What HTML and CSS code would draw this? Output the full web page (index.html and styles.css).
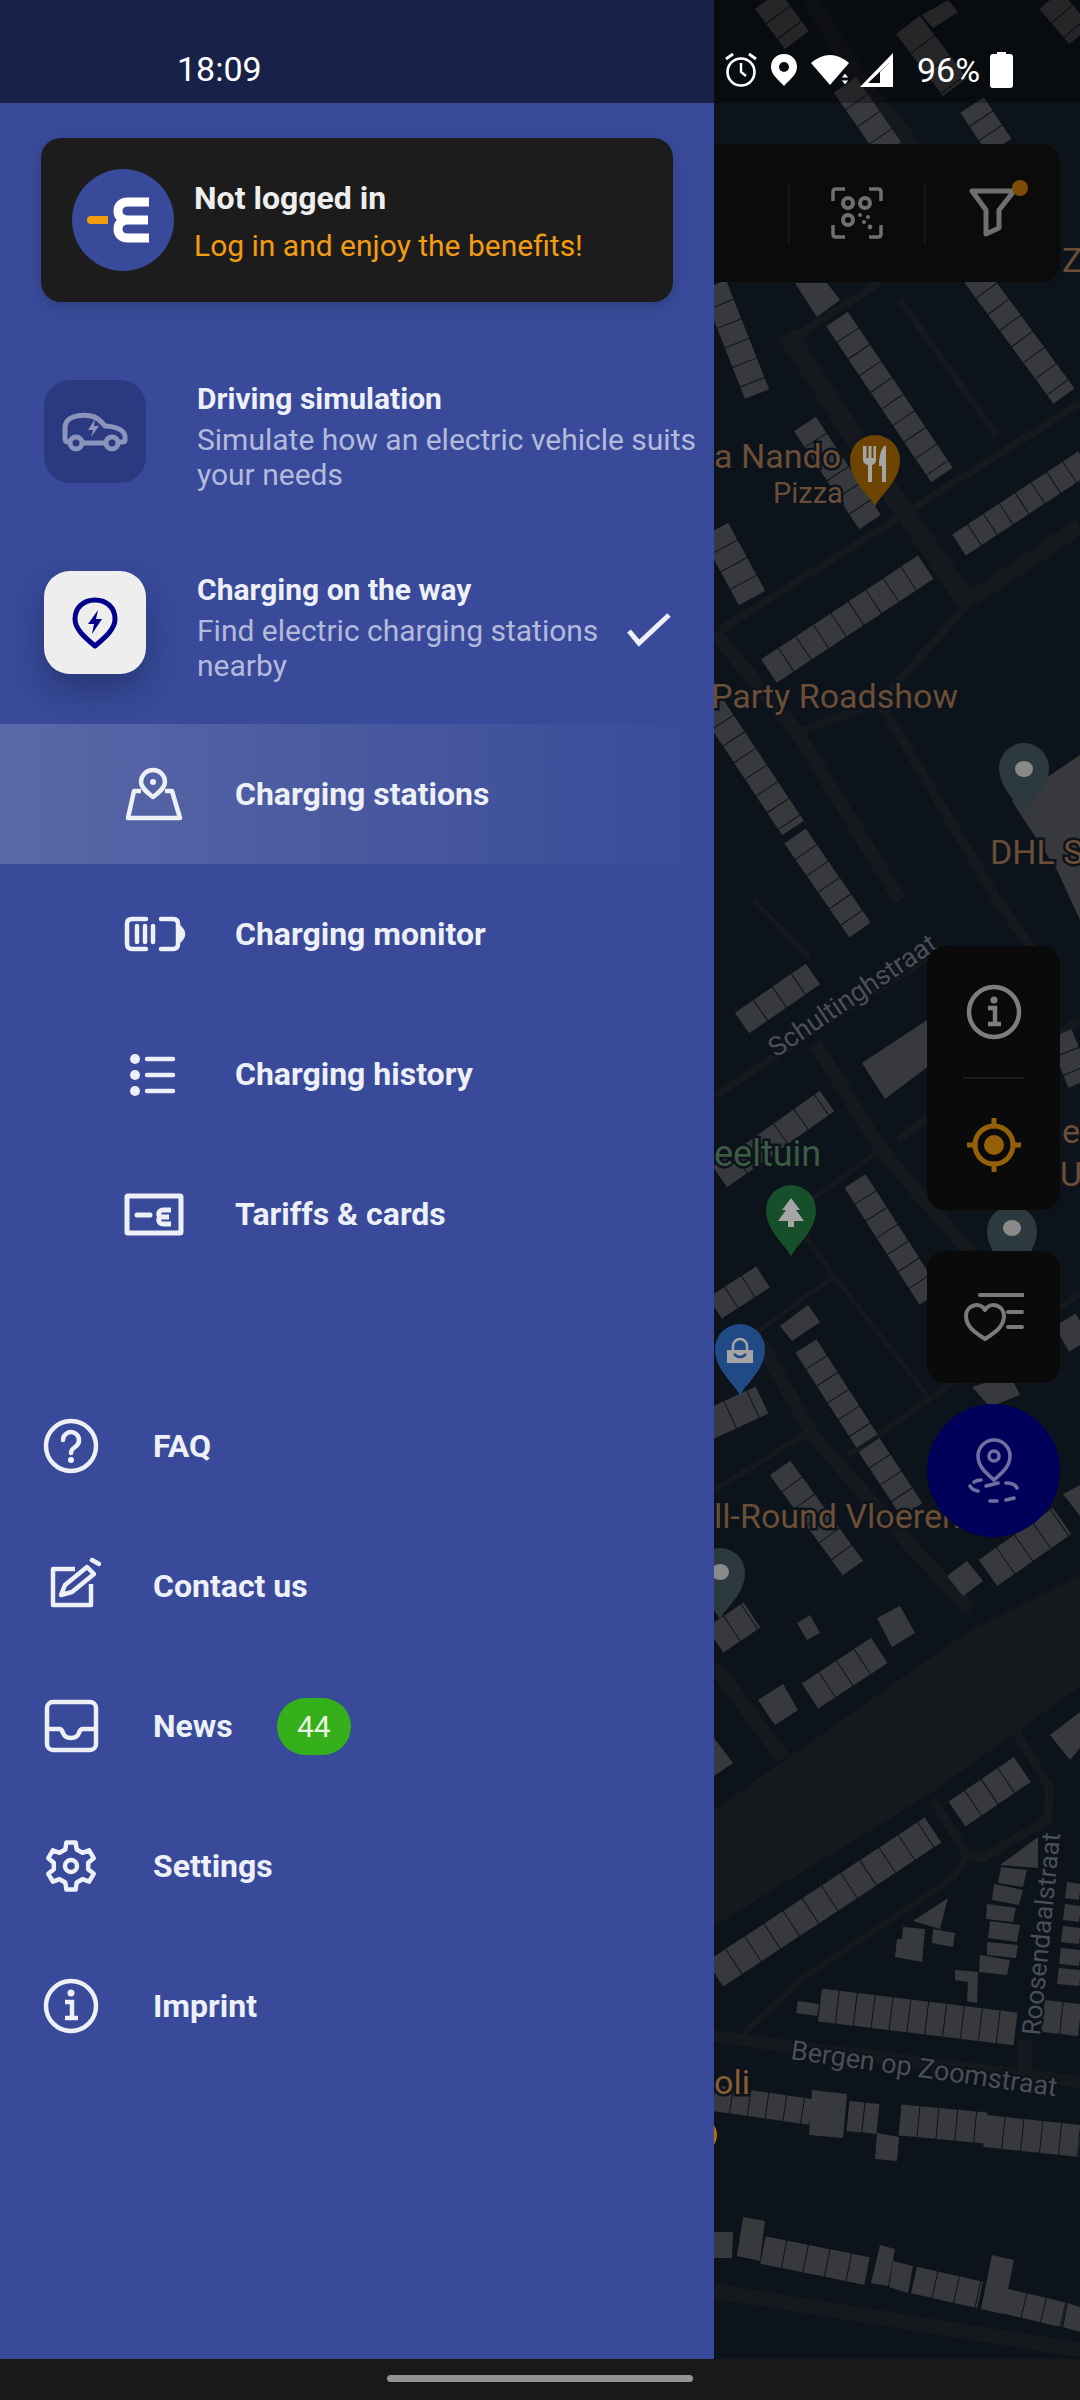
FILE: index.html
```html
<!DOCTYPE html>
<html lang="en">
<head>
  <meta charset="UTF-8" />
  <title>Charging stations</title>
  <link rel="stylesheet" href="styles.css">
</head>
<body>
<div class="screen">
  <div class="main">

    <aside class="drawer">
      <div class="drawer-status">18:09</div>

      <div class="account">
        <svg class="account-logo" viewBox="0 0 102 102">
          <circle cx="51" cy="51" r="51" fill="#384a99"/>
          <path d="M19 47 H36 V55 H19 Q15 55 15 51 Q15 47 19 47Z" fill="#f39c12"/>
          <path d="M77 33 H56 C49 33 46 37 46 42 C46 47 49 51 56 51 H76 M56 51 C49 51 46 55 46 60 C46 65 49 69 56 69 H77" fill="none" stroke="#fff" stroke-width="9"/>
        </svg>
        <div class="account-text">
          <div class="account-title">Not logged in</div>
          <div class="account-sub">Log in and enjoy the benefits!</div>
        </div>
      </div>

      <div class="modes">
        <div class="mode">
          <div class="mode-tile">
            <svg width="66" height="40" viewBox="0 0 66 40" fill="none" stroke="#8b94bd" stroke-width="5" stroke-linejoin="round" stroke-linecap="round">
              <path d="M7 30 H6 Q3 30 3 26 V16 Q3 8 11 5 Q20 2 29 4 Q36 5 43 14 Q61 15 63 24 V28 Q63 30 60 30 H58"/>
              <circle cx="14" cy="31" r="6"/>
              <circle cx="50" cy="31" r="6"/>
              <path d="M22 31 H42"/>
              <path d="M33 7 L26 18 H31 L29 25 L37 14 H32Z" fill="#8b94bd" stroke="none"/>
            </svg>
          </div>
          <div class="mode-text">
            <div class="mode-title">Driving simulation</div>
            <div class="mode-sub">Simulate how an electric vehicle suits your needs</div>
          </div>
        </div>

        <div class="mode">
          <div class="mode-tile mode-tile-on">
            <svg width="46" height="52" viewBox="0 0 46 52" fill="none" stroke="#00008b" stroke-width="5" stroke-linejoin="round">
              <path d="M23 3 C11 3 3 11 3 22 C3 33 15 42 23 49 C31 42 43 33 43 22 C43 11 35 3 23 3Z"/>
              <path d="M26 13 L16 27 H22 L20 37 L30 22 H24Z" fill="#00008b" stroke="none"/>
            </svg>
          </div>
          <div class="mode-text">
            <div class="mode-title">Charging on the way</div>
            <div class="mode-sub">Find electric charging stations nearby</div>
          </div>
          <svg class="mode-check" width="44" height="34" viewBox="0 0 44 34" fill="none" stroke="#eef0f7" stroke-width="5">
            <path d="M2 18 L12 30 L42 2"/>
          </svg>
        </div>
      </div>

      <nav class="sub-menu">
        <div class="sub-item sub-item-on">
          <svg class="sub-icon" viewBox="0 0 66 66" fill="none" stroke="#eef0f7" stroke-width="4.5" stroke-linejoin="round">
            <path d="M21 30 H14 L8 57 H60 L52 30 H45"/>
            <path d="M33 36 C27 31 21 27 21 21 A12 12 0 0 1 45 21 C45 27 39 31 33 36Z"/>
            <circle cx="33" cy="21" r="3" fill="#eef0f7" stroke="none"/>
          </svg>
          <span>Charging stations</span>
        </div>
        <div class="sub-item">
          <svg class="sub-icon" viewBox="0 0 66 66" fill="none" stroke="#eef0f7" stroke-width="4.5" stroke-linecap="round">
            <path d="M26 18 H12 Q7 18 7 23 V43 Q7 48 12 48 H26"/>
            <path d="M41 18 H53 Q58 18 58 23 V43 Q58 48 53 48 H41"/>
            <path d="M17 25 V41 M25 25 V41 M33 25 V41"/>
            <path d="M60 27 Q66 33 60 39Z" fill="#eef0f7"/>
          </svg>
          <span>Charging monitor</span>
        </div>
        <div class="sub-item">
          <svg class="sub-icon" viewBox="0 0 66 66" fill="none" stroke="#eef0f7" stroke-width="4.5" stroke-linecap="round">
            <circle cx="15" cy="18" r="5" fill="#eef0f7" stroke="none"/>
            <circle cx="15" cy="34" r="5" fill="#eef0f7" stroke="none"/>
            <circle cx="15" cy="50" r="5" fill="#eef0f7" stroke="none"/>
            <path d="M27 18 H53 M27 34 H53 M27 50 H53"/>
          </svg>
          <span>Charging history</span>
        </div>
        <div class="sub-item">
          <svg class="sub-icon" viewBox="0 0 66 66" fill="none" stroke="#eef0f7" stroke-width="5">
            <rect x="7" y="15" width="54" height="37" rx="1"/>
            <path d="M17 34 H30" stroke-linecap="round"/>
            <path d="M51 29 H43 C38 29 37 36 42 36 H49 M42 36 C37 36 38 43 43 43 H51"/>
          </svg>
          <span>Tariffs &amp; cards</span>
        </div>
      </nav>

      <nav class="main-menu">
        <div class="menu-item">
          <svg class="menu-icon" viewBox="0 0 60 60" fill="none" stroke="#eef0f7" stroke-width="4.5">
            <circle cx="30" cy="30" r="25"/>
            <path d="M22 24 a8 8 0 1 1 12 7 c-3 2 -4 3 -4 6" stroke-linecap="round"/>
            <circle cx="30" cy="44" r="3" fill="#eef0f7" stroke="none"/>
          </svg>
          <span>FAQ</span>
        </div>
        <div class="menu-item">
          <svg class="menu-icon" viewBox="0 0 60 60" fill="none" stroke="#eef0f7" stroke-width="4.5" stroke-linejoin="round">
            <path d="M34 13 H12 V49 H50 V28"/>
            <path d="M20 39 L24 29 L46 11 L53 18 L31 36Z"/>
            <path d="M51 4 L58 8" stroke-linecap="round"/>
          </svg>
          <span>Contact us</span>
        </div>
        <div class="menu-item">
          <svg class="menu-icon" viewBox="0 0 60 60" fill="none" stroke="#eef0f7" stroke-width="4.5">
            <rect x="6" y="6" width="49" height="48" rx="6"/>
            <path d="M6 33 H18 Q21 33 22 37 Q24 42 30 42 Q36 42 38 37 Q39 33 42 33 H55"/>
          </svg>
          <span>News</span>
          <span class="badge">44</span>
        </div>
        <div class="menu-item">
          <svg class="menu-icon" viewBox="0 0 60 60" fill="none" stroke="#eef0f7" stroke-width="4.5" stroke-linejoin="round">
            <path d="M25.4 6.4 H34.6 L35.7 13.5 L41.5 16.8 L48.1 14.3 L52.7 22.2 L47.2 26.7 V33.3 L52.7 37.8 L48.1 45.7 L41.5 43.2 L35.7 46.5 L34.6 53.6 H25.4 L24.3 46.5 L18.5 43.2 L11.9 45.7 L7.3 37.8 L12.8 33.3 V26.7 L7.3 22.2 L11.9 14.3 L18.5 16.8 L24.3 13.5Z"/>
            <circle cx="30" cy="30" r="6"/>
          </svg>
          <span>Settings</span>
        </div>
        <div class="menu-item">
          <svg class="menu-icon" viewBox="0 0 60 60" fill="none" stroke="#eef0f7" stroke-width="4.5">
            <circle cx="30" cy="30" r="25"/>
            <circle cx="30" cy="17" r="3.5" fill="#eef0f7" stroke="none"/>
            <path d="M24 26 H31 V42 M24 42 H37"/>
          </svg>
          <span>Imprint</span>
        </div>
      </nav>
    </aside>

    <section class="map">
      <svg class="map-canvas" viewBox="714 0 366 2359">
        <defs>
          <path id="pin" d="M0 0 C-3 -10 -25 -25 -25 -47 A25 25 0 1 1 25 -47 C25 -25 3 -10 0 0Z"/>
        </defs>

        <!-- roads -->
        <g class="roads">
          <path d="M714 1810 L970 1630 L1080 1575 V1687 L930 1794 L714 1926Z" class="road-fill"/>
          <path d="M787 334 L887 487 L967 602" stroke-width="20"/>
          <path d="M810 0 L867 90 L903 133 L1000 280" stroke-width="16"/>
          <path d="M900 300 L997 436" stroke-width="7"/>
          <path d="M722 629 L1080 403" stroke-width="8"/>
          <path d="M793 338 L853 300 L880 282" stroke-width="8"/>
          <path d="M973 598 L1080 526" stroke-width="16"/>
          <path d="M715 633 L797 732 L900 900" stroke-width="14"/>
          <path d="M880 702 L997 900 L1040 960" stroke-width="10"/>
          <path d="M797 732 L880 702 L973 598" stroke-width="8"/>
          <path d="M815 1043 L880 1148 L970 1253" stroke-width="14"/>
          <path d="M753 900 L810 958" stroke-width="5"/>
          <path d="M715 1096 L860 1000 L927 958" stroke-width="8"/>
          <path d="M897 1141 L927 1118 L1080 1020" stroke-width="8"/>
          <path d="M807 1203 L880 1150" stroke-width="5"/>
          <path d="M800 1230 L833 1275 L927 1395" stroke-width="5"/>
          <path d="M750 1337 L833 1277" stroke-width="5"/>
          <path d="M760 1342 L813 1436 L900 1534 L970 1610" stroke-width="14"/>
          <path d="M847 1456 L967 1373 L1080 1293" stroke-width="6"/>
          <path d="M715 1490 L810 1431" stroke-width="6"/>
          <path d="M715 1666 L783 1758" stroke-width="15"/>
          <path d="M933 1799 L967 1855 L983 1858 L1047 1820 L1050 1789 L1017 1733" stroke-width="9"/>
          <path d="M743 2034 L800 1980 L953 1878 L967 1855" stroke-width="7"/>
          <path d="M714 2036 L787 2046 L1080 2082" stroke-width="12"/>
          <path d="M714 2291 L1080 2350" stroke-width="15"/>
          <path d="M1025 2040 V2072" stroke-width="15"/>
        </g>

        <!-- building rows, one stroke with a hairline dash between the houses -->
        <g class="rows">
          <path d="M767 0 L797 40" stroke-width="30" stroke-dasharray="18 1"/>
          <path d="M908 25 L955 87" stroke-width="30" stroke-dasharray="24 1"/>
          <path d="M845 85 L890 150" stroke-width="27" stroke-dasharray="20 1"/>
          <path d="M972 105 L1000 147" stroke-width="28" stroke-dasharray="16 1"/>
          <path d="M1050 0 L1080 35" stroke-width="28" stroke-dasharray="18 1"/>
          <path d="M837 319 L942 475" stroke-width="26" stroke-dasharray="19 1"/>
          <path d="M975 275 L1064 396" stroke-width="26" stroke-dasharray="19 1"/>
          <path d="M714 285 L757 394" stroke-width="26" stroke-dasharray="20 1"/>
          <path d="M805 424 L870 522" stroke-width="26" stroke-dasharray="19 1"/>
          <path d="M959 545 L1085 462" stroke-width="25" stroke-dasharray="18 1"/>
          <path d="M769 671 L926 567" stroke-width="28" stroke-dasharray="20 1"/>
          <path d="M715 530 L752 598" stroke-width="30" stroke-dasharray="19 1"/>
          <path d="M712 706 L793 828" stroke-width="26" stroke-dasharray="19 1"/>
          <path d="M795 836 L860 930" stroke-width="26" stroke-dasharray="19 1"/>
          <path d="M742 1023 L813 974" stroke-width="25" stroke-dasharray="22 1"/>
          <path d="M720 1177 L827 1101" stroke-width="25" stroke-dasharray="24 1"/>
          <path d="M855 1181 L930 1298" stroke-width="25" stroke-dasharray="19 1"/>
          <path d="M715 1308 L763 1277" stroke-width="25" stroke-dasharray="19 1"/>
          <path d="M806 1346 L867 1441" stroke-width="25" stroke-dasharray="19 1"/>
          <path d="M869 1445 L912 1510" stroke-width="25" stroke-dasharray="19 1"/>
          <path d="M708 1425 L762 1400" stroke-width="30" stroke-dasharray="24 1"/>
          <path d="M780 1468 L853 1568" stroke-width="25" stroke-dasharray="20 1"/>
          <path d="M988 1573 L1062 1521" stroke-width="32" stroke-dasharray="21 1"/>
          <path d="M1065 1320 L1080 1345" stroke-width="25"/>
          <path d="M1060 1034 L1080 1083" stroke-width="25" stroke-dasharray="19 1"/>
          <path d="M810 1696 L880 1650" stroke-width="30" stroke-dasharray="20 1"/>
          <path d="M715 1640 L752 1615" stroke-width="30" stroke-dasharray="20 1"/>
          <path d="M957 1814 L1023 1769" stroke-width="30" stroke-dasharray="19 1"/>
          <path d="M715 1974 L933 1830" stroke-width="30" stroke-dasharray="22 1"/>
          <path d="M820 2005 L1016 2029" stroke-width="33" stroke-dasharray="17 1"/>
          <path d="M797 2007 L818 2010" stroke-width="12"/>
          <path d="M1043 2016 L1080 2020" stroke-width="32" stroke-dasharray="18 1"/>
          <path d="M1066 1890 L1080 1892" stroke-width="16"/>
          <path d="M1064 1912 L1080 1914" stroke-width="16"/>
          <path d="M1062 1934 L1080 1936" stroke-width="16"/>
          <path d="M1060 1956 L1080 1958" stroke-width="16"/>
          <path d="M1058 1976 L1080 1978" stroke-width="16"/>
          <path d="M714 2098 L811 2112" stroke-width="26" stroke-dasharray="17 1"/>
          <path d="M848 2116 L878 2119" stroke-width="30" stroke-dasharray="15 1"/>
          <path d="M900 2120 L986 2128" stroke-width="31" stroke-dasharray="18 1"/>
          <path d="M985 2131 L1080 2141" stroke-width="32" stroke-dasharray="18 1"/>
          <path d="M763 2250 L867 2271" stroke-width="28" stroke-dasharray="21 1"/>
          <path d="M914 2280 L980 2295" stroke-width="27" stroke-dasharray="21 1"/>
          <path d="M1005 2301 L1064 2315" stroke-width="25" stroke-dasharray="19 1"/>
        </g>

        <g class="blocks">
          <polygon points="922,15 948,0 958,12 933,28"/>
          <polygon points="795,283 827,283 840,300 817,317"/>
          <polygon points="1012,801 1080,755 1080,920 1057,870"/>
          <polygon points="862,1063 930,1018 930,1065 885,1099"/>
          <polygon points="780,1326 808,1305 820,1322 792,1341"/>
          <polygon points="947,1576 967,1561 983,1581 963,1596"/>
          <polygon points="1063,1494 1080,1485 1080,1516"/>
          <polygon points="972,1387 1010,1375 1020,1395 990,1407"/>
          <polygon points="758,1700 783,1684 798,1710 775,1725"/>
          <polygon points="877,1618 900,1606 915,1633 892,1647"/>
          <polygon points="797,1623 810,1615 820,1633 807,1640"/>
          <polygon points="714,1738 733,1763 714,1776"/>
          <polygon points="1050,1735 1080,1712 1080,1748 1070,1760"/>
          <polygon points="913,1921 948,1898 940,1929"/>
          <polygon points="903,1927 925,1929 922,1962 895,1957 897,1939 902,1939"/>
          <polygon points="933,1929 955,1933 953,1947 932,1943"/>
          <polygon points="1000,1865 1038,1837 1038,1868"/>
          <polygon points="1001,1867 1027,1870 1023,1887 998,1883"/>
          <polygon points="994,1884 1023,1890 1019,1905 992,1900"/>
          <polygon points="987,1904 1016,1908 1013,1922 986,1919"/>
          <polygon points="990,1921 1020,1925 1017,1942 988,1938"/>
          <polygon points="987,1942 1018,1945 1016,1958 987,1955"/>
          <polygon points="980,1955 1010,1960 1007,1975 979,1972"/>
          <polygon points="955,1970 978,1972 977,2003 967,2001 968,1982 955,1980"/>
          <polygon points="812,2090 847,2094 843,2138 809,2135"/>
          <polygon points="877,2133 899,2137 897,2161 875,2159"/>
          <polygon points="714,2232 733,2232 732,2258 714,2258"/>
          <polygon points="743,2217 765,2221 760,2261 737,2256"/>
          <polygon points="880,2245 895,2249 888,2286 871,2283"/>
          <polygon points="893,2261 913,2266 908,2293 889,2287"/>
          <polygon points="992,2255 1014,2260 1003,2314 981,2309"/>
          <polygon points="1068,2303 1080,2307 1080,2332 1063,2327"/>
        </g>

        <!-- place labels -->
        <text class="label" x="714" y="468">a Nando</text>
        <text class="label label-sm" x="773" y="503">Pizza</text>
        <text class="label" x="711" y="708">Party Roadshow</text>
        <text class="label" x="990" y="864">DHL S</text>
        <text class="label label-green" x="714" y="1166">eeltuin</text>
        <text class="label" x="1062" y="1143">et</text>
        <text class="label" x="1060" y="1186">U</text>
        <text class="label" x="1062" y="272">Z</text>
        <text class="label" x="714" y="1528">ll-Round Vloeren</text>
        <text class="label label-bright" x="714" y="2094">oli</text>
        <text class="street" transform="translate(776 1058) rotate(-34)">Schultinghstraat</text>
        <text class="street" transform="translate(790 2059) rotate(8)">Bergen op Zoomstraat</text>
        <text class="street street-tall" transform="translate(1040 2036) rotate(-84.3)">Roosendaalstraat</text>

        <!-- pins -->
        <use href="#pin" x="875" y="507" fill="#6e4500"/>
        <path d="M863 446 V460 Q863 464 868 465 V482 H872 V465 Q876 464 876 460 V446 H873.5 V458 H871.5 V446 H868.5 V458 H866.5 V446Z M884 446 Q879 452 879 466 H882 V482 H886 V446Z" fill="#a5a5a5"/>
        <use href="#pin" x="1024" y="815" fill="#2c3a40"/>
        <ellipse cx="1024" cy="769" rx="9" ry="8" fill="#8a8a8a"/>
        <use href="#pin" x="791" y="1257" fill="#15502a"/>
        <path d="M791 1198 L800 1210 H796 L804 1221 H794 V1227 H788 V1221 H778 L786 1210 H782Z" fill="#a5a5a5"/>
        <use href="#pin" x="740" y="1396" fill="#1f4a85"/>
        <path d="M727 1350 H753 V1363 H727Z" fill="#a5a5a5"/>
        <path d="M733 1350 V1346 A7 7 0 0 1 747 1346 V1350" fill="none" stroke="#a5a5a5" stroke-width="2.5"/>
        <path d="M734 1354 Q740 1360 746 1354" fill="none" stroke="#1f4a85" stroke-width="2.5"/>
        <use href="#pin" x="1012" y="1278" fill="#2c3a40"/>
        <ellipse cx="1012" cy="1228" rx="9" ry="8" fill="#8a8a8a"/>
        <use href="#pin" x="720" y="1620" fill="#2c3a40"/>
        <ellipse cx="720" cy="1572" rx="9" ry="8" fill="#8a8a8a"/>
        <circle cx="700" cy="2135" r="17" fill="#b0700f"/>
      </svg>

      <div class="map-status">
        <svg class="st-alarm" width="32" height="36" viewBox="0 0 32 36" fill="none" stroke="#fff" stroke-width="2.6">
          <circle cx="16" cy="20" r="13.5"/>
          <path d="M16 11 V20 L21 24" stroke-width="2.4"/>
          <path d="M1 7 L8 2 M31 7 L24 2" stroke-width="2.8"/>
        </svg>
        <svg class="st-pin" width="26" height="32" viewBox="0 0 26 32">
          <path d="M13 0 C5 0 0 6 0 13 C0 21 8 26 13 32 C18 26 26 21 26 13 C26 6 21 0 13 0Z M13 8 A5 5 0 1 1 13 18 A5 5 0 1 1 13 8Z" fill="#fff" fill-rule="evenodd"/>
        </svg>
        <svg class="st-wifi" width="39" height="32" viewBox="0 0 39 32">
          <path d="M0 9 Q19 -7 38 9 L19 31Z" fill="#fff"/>
          <path d="M34 19 L38 24 H30Z M30 26 H38 L34 31Z" fill="#fff" stroke="#0b0f14" stroke-width="1"/>
        </svg>
        <svg class="st-signal" width="34" height="34" viewBox="0 0 34 34">
          <path d="M33 0 V34 H0Z M29 10 L8 30 H29Z" fill="#fff" fill-rule="evenodd"/>
          <path d="M29 10 L20 19 V30 H29Z" fill="#fff"/>
        </svg>
        <span class="st-level">96%</span>
        <svg class="st-battery" width="23" height="36" viewBox="0 0 23 36">
          <path d="M7 0 H16 V2 H20 Q23 2 23 5 V33 Q23 36 20 36 H3 Q0 36 0 33 V5 Q0 2 3 2 H7Z" fill="#fff"/>
        </svg>
      </div>

      <div class="tool-bar">
        <div class="tool-line"></div>
        <div class="tool-cell">
          <svg width="52" height="52" viewBox="0 0 52 52" fill="none" stroke="#6f6f6f" stroke-width="3.5">
            <path d="M2 14 V5 Q2 2 5 2 H14 M38 2 H47 Q50 2 50 5 V14 M50 38 V47 Q50 50 47 50 H38 M14 50 H5 Q2 50 2 47 V38"/>
            <circle cx="17" cy="16" r="5" stroke-width="4"/>
            <circle cx="34" cy="16" r="5" stroke-width="4"/>
            <circle cx="17" cy="33" r="5" stroke-width="4"/>
            <g fill="#6f6f6f" stroke="none">
              <circle cx="29" cy="28" r="2"/>
              <circle cx="37" cy="30" r="2"/>
              <circle cx="33" cy="35" r="2"/>
              <circle cx="39" cy="40" r="2.4"/>
            </g>
          </svg>
        </div>
        <div class="tool-line"></div>
        <div class="tool-cell">
          <div class="filter">
            <svg width="48" height="50" viewBox="0 0 48 50" fill="none" stroke="#6f6f6f" stroke-width="5" stroke-linejoin="round">
              <path d="M3 3 H45 L30 22 V40 L17 46 V22Z"/>
            </svg>
            <span class="filter-dot"></span>
          </div>
        </div>
      </div>

      <div class="tools">
        <div class="tool-box">
          <div class="tool-row">
            <svg width="56" height="56" viewBox="0 0 56 56" fill="none" stroke="#7d7d7d" stroke-width="4.5">
              <circle cx="28" cy="28" r="25"/>
              <circle cx="28" cy="16" r="3.5" fill="#7d7d7d" stroke="none"/>
              <path d="M22 24 H29 V40 M22 40 H35"/>
            </svg>
          </div>
          <div class="tool-sep"></div>
          <div class="tool-row">
            <svg width="54" height="54" viewBox="0 0 54 54" fill="none" stroke="#95600a" stroke-width="5">
              <circle cx="27" cy="27" r="19"/>
              <circle cx="27" cy="27" r="10" fill="#95600a" stroke="none"/>
              <path d="M27 1 V8 M27 46 V53 M1 27 H8 M46 27 H53" stroke-linecap="round"/>
            </svg>
          </div>
        </div>
        <div class="tool-box tool-box-fav">
          <svg width="60" height="48" viewBox="0 0 60 48" fill="none" stroke="#7a7a7a" stroke-width="4" stroke-linecap="round" stroke-linejoin="round">
            <path d="M16 2 H59 M44 19 H58 M44 34 H58"/>
            <path d="M21 46 C12 40 2 34 2 23 C2 12 16 8 21 17 C26 8 40 12 40 23 C40 34 30 40 21 46Z"/>
          </svg>
        </div>
        <div class="fab">
          <svg width="60" height="70" viewBox="0 0 60 70" fill="none" stroke="#6f6fa0" stroke-width="3.6" stroke-linecap="round">
            <path d="M30 44 C25 39 14 32 14 20 A16 16 0 0 1 46 20 C46 32 35 39 30 44Z"/>
            <circle cx="30" cy="20" r="5"/>
            <path d="M6 50 Q8 54 14 55 M10 46 Q13 44 17 44 M22 50 L34 47 M42 47 Q51 47 53 52 M26 65 H33 M42 64 L50 62"/>
          </svg>
        </div>
      </div>
    </section>

  </div>
  <div class="nav-bar"><div class="nav-handle"></div></div>
</div>
</body>
</html>
```

FILE: styles.css
```css
* {
  box-sizing: border-box;
}
body {
  margin: 0;
  font-family: Roboto, Arial, sans-serif;
  background: #191919;
}
.screen {
  width: 1080px;
  height: 2400px;
  display: flex;
  flex-direction: column;
  overflow: hidden;
}
.main {
  flex: 1;
  display: flex;
  min-height: 0;
}

/* drawer */
.drawer {
  width: 714px;
  flex: none;
  background: #384a99;
  color: #eef0f7;
  position: relative;
  z-index: 2;
}
.drawer-status {
  height: 103px;
  padding: 49px 0 0 177px;
  background: #182148;
  color: #fff;
  font-size: 34px;
  line-height: 40px;
}
.account {
  margin: 35px 41px 0 41px;
  height: 164px;
  padding-left: 31px;
  display: flex;
  align-items: center;
  gap: 20px;
  background: #1c1c1c;
  border-radius: 20px;
  box-shadow: 0 4px 14px rgba(0, 0, 0, 0.15);
}
.account-logo {
  width: 102px;
  height: 102px;
  flex: none;
}
.account-text {
  padding-top: 4px;
}
.account-title {
  font-size: 32px;
  font-weight: 700;
  line-height: 38px;
  color: #eee;
}
.account-sub {
  margin-top: 10px;
  font-size: 30px;
  line-height: 38px;
  color: #f39c12;
}

.modes {
  margin-top: 78px;
}
.mode {
  display: flex;
  align-items: flex-start;
  padding-left: 44px;
  margin-bottom: 79px;
}
.mode:last-child {
  margin-bottom: 0;
}
.mode-tile {
  width: 102px;
  height: 103px;
  flex: none;
  margin-right: 51px;
  display: flex;
  align-items: center;
  justify-content: center;
  background: #2b3a80;
  border-radius: 26px;
}
.mode-tile-on {
  background: #eee;
  box-shadow: 0 16px 30px rgba(15, 22, 60, 0.35);
}
.mode-text {
  flex: 1;
  min-width: 0;
}
.mode-title {
  font-size: 30px;
  font-weight: 700;
  line-height: 36px;
  margin-top: 1px;
}
.mode-sub {
  margin-top: 5px;
  font-size: 30px;
  line-height: 35px;
  color: #b4badb;
}
.mode-check {
  flex: none;
  margin: 42px 43px 0 20px;
}

.sub-menu {
  margin-top: 41px;
}
.sub-item {
  height: 140px;
  padding-left: 120px;
  display: flex;
  align-items: center;
  gap: 49px;
  font-size: 32px;
  font-weight: 700;
}
.sub-item-on {
  background: linear-gradient(90deg, #5a68a7, #384a99);
}
.sub-icon {
  width: 66px;
  height: 66px;
  flex: none;
}

.main-menu {
  margin-top: 92px;
}
.menu-item {
  height: 140px;
  padding-left: 41px;
  display: flex;
  align-items: center;
  gap: 52px;
  font-size: 32px;
  font-weight: 700;
}
.menu-icon {
  width: 60px;
  height: 60px;
  flex: none;
}
.badge {
  width: 74px;
  height: 57px;
  margin-left: -8px;
  border-radius: 29px;
  background: #35b01a;
  color: #e8f5e0;
  font-size: 30px;
  font-weight: 400;
  line-height: 57px;
  text-align: center;
}

/* map */
.map {
  flex: 1;
  position: relative;
  overflow: hidden;
  background: #0d131a;
}
.map-canvas {
  position: absolute;
  left: 0;
  top: 0;
  width: 366px;
  height: 2359px;
}
.roads path {
  fill: none;
  stroke: #15191e;
}
.roads .road-fill {
  fill: #15191e;
  stroke: none;
}
.rows path {
  fill: none;
  stroke: #38393d;
}
.blocks polygon {
  fill: #38393d;
}
.label {
  font-size: 34px;
  fill: #6a4e38;
  stroke: #0d131a;
  stroke-width: 5px;
  paint-order: stroke;
}
.label-sm {
  font-size: 29px;
}
.label-green {
  font-size: 36px;
  fill: #3c5a44;
}
.label-bright {
  fill: #8a5c33;
}
.street {
  font-size: 27px;
  fill: #4a4f57;
  stroke: #0d131a;
  stroke-width: 4px;
  paint-order: stroke;
}
.street-tall {
  font-size: 26px;
}

.map-status {
  position: absolute;
  left: 0;
  top: 0;
  width: 100%;
  height: 103px;
  padding: 36px 0 0 11px;
  display: flex;
  align-items: center;
  background: rgba(0, 0, 0, 0.32);
  color: #fff;
}
.st-pin,
.st-wifi {
  margin-left: 14px;
}
.st-signal {
  margin-left: 10px;
}
.st-level {
  margin-left: 23px;
  font-size: 34px;
}
.st-battery {
  margin-left: 10px;
}

.tool-bar {
  position: absolute;
  left: -20px;
  right: 20px;
  top: 144px;
  height: 138px;
  display: flex;
  align-items: center;
  justify-content: flex-end;
  background: #0b0b0b;
  border-radius: 18px;
}
.tool-line {
  width: 2px;
  height: 60px;
  background: #171717;
}
.tool-cell {
  width: 134px;
  display: flex;
  align-items: center;
  justify-content: center;
}
.filter {
  position: relative;
  display: flex;
}
.filter-dot {
  position: absolute;
  top: -8px;
  right: -11px;
  width: 16px;
  height: 16px;
  border-radius: 50%;
  background: #7d4c06;
}

.tools {
  position: absolute;
  right: 20px;
  top: 946px;
  width: 133px;
  display: flex;
  flex-direction: column;
}
.tool-box {
  background: #0a0a0a;
  border-radius: 18px;
}
.tool-row {
  height: 131px;
  display: flex;
  align-items: center;
  justify-content: center;
}
.tool-sep {
  width: 61px;
  height: 2px;
  margin: 0 auto;
  background: #1b1b1b;
}
.tool-box-fav {
  height: 132px;
  margin-top: 41px;
  display: flex;
  align-items: center;
  justify-content: center;
}
.fab {
  width: 133px;
  height: 133px;
  margin-top: 21px;
  border-radius: 50%;
  background: #00005a;
  display: flex;
  align-items: center;
  justify-content: center;
}

.nav-bar {
  height: 41px;
  flex: none;
  padding-top: 16px;
  background: #191919;
}
.nav-handle {
  width: 306px;
  height: 7px;
  margin-left: 387px;
  border-radius: 4px;
  background: #949494;
}
```
